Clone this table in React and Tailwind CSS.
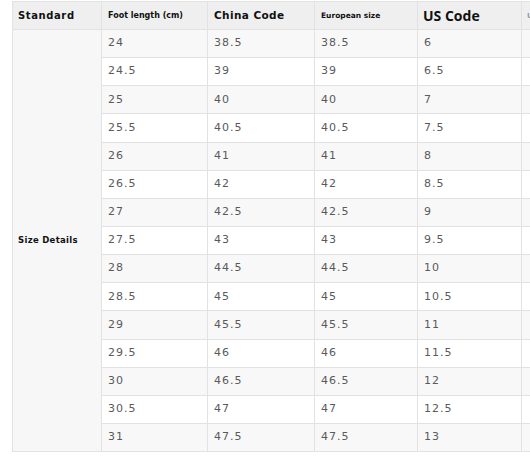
const rows = [
  ['24', '38.5', '38.5', '6'],
  ['24.5', '39', '39', '6.5'],
  ['25', '40', '40', '7'],
  ['25.5', '40.5', '40.5', '7.5'],
  ['26', '41', '41', '8'],
  ['26.5', '42', '42', '8.5'],
  ['27', '42.5', '42.5', '9'],
  ['27.5', '43', '43', '9.5'],
  ['28', '44.5', '44.5', '10'],
  ['28.5', '45', '45', '10.5'],
  ['29', '45.5', '45.5', '11'],
  ['29.5', '46', '46', '11.5'],
  ['30', '46.5', '46.5', '12'],
  ['30.5', '47', '47', '12.5'],
  ['31', '47.5', '47.5', '13'],
];

const App = () => {
  return (
    <div className="w-[530px] h-[465px] overflow-hidden bg-white">
      <div className="pl-[12px] pt-[1px]">
        <table className="border-collapse table-fixed w-[620px] font-['DejaVu_Sans',sans-serif]">
          <colgroup>
            <col className="w-[89px]" />
            <col className="w-[106px]" />
            <col className="w-[107px]" />
            <col className="w-[103px]" />
            <col className="w-[104px]" />
            <col className="w-[111px]" />
          </colgroup>
          <thead>
            <tr className="h-[28px] bg-[#efefef] text-[#111]">
              <th className="border border-[#e2e2e2] px-[5px] text-left text-[10px] font-bold tracking-[0.6px]">Standard</th>
              <th className="border border-[#e2e2e2] px-[6px] text-left text-[8px] font-bold">Foot length (cm)</th>
              <th className="border border-[#e2e2e2] px-[6px] text-left text-[10.5px] font-bold tracking-[0.4px]">China Code</th>
              <th className="border border-[#e2e2e2] px-[6px] text-left text-[7.5px] font-bold">European size</th>
              <th className="border border-[#e2e2e2] px-[5px] text-left text-[14px] font-bold font-['Open_Sans',sans-serif]">US Code</th>
              <th className="border border-[#e2e2e2] pl-[5px] text-left text-[7px] font-bold leading-[8px] text-[#999]">UK Code</th>
            </tr>
          </thead>
          <tbody>
            {rows.map((r, i) => (
              <tr key={r[0]} className={i % 2 === 0 ? 'h-[28.15px] bg-[#f8f8f8]' : 'h-[28.15px] bg-white'}>
                {i === 0 && (
                  <td
                    rowSpan={rows.length}
                    className="border border-[#e2e2e2] bg-[#f7f7f7] px-[5px] text-left text-[8.5px] font-bold tracking-[0.3px] text-[#111]"
                  >
                    Size Details
                  </td>
                )}
                {r.map((v, j) => (
                  <td key={j} className="border border-[#e2e2e2] px-[6px] text-left text-[11px] tracking-[1px] text-[#5a5a5a]">
                    {v}
                  </td>
                ))}
                <td className="border border-[#e2e2e2] px-[6px] text-[11px] text-[#555]"></td>
              </tr>
            ))}
          </tbody>
        </table>
      </div>
    </div>
  );
};

export default App;
